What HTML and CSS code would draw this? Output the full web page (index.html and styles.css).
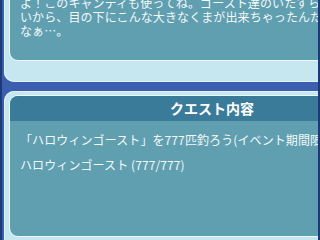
FILE: index.html
```html
<!DOCTYPE html>
<html>
<head>
  <title>クエスト内容</title>
  <link rel="stylesheet" href="styles.css">
</head>
<body>
  <div class="frame">
    <div class="panel talk">
      <div class="box">
        <p class="talk-text">よ！このキャンディも使ってね。ゴースト達のいたずらっ<br>いから、目の下にこんな大きなくまが出来ちゃったんだ<br>なぁ…。</p>
      </div>
    </div>

    <div class="panel quest">
      <div class="box">
        <div class="box-head">クエスト内容</div>
        <div class="box-body">
          <p>「ハロウィンゴースト」を777匹釣ろう(イベント期間限定)</p>
          <p>ハロウィンゴースト (777/777)</p>
        </div>
      </div>
    </div>
  </div>
</body>
</html>
```

FILE: styles.css
```css
body {
  margin: 0;
  background: #3b5fae;
  font-family: "Noto Sans CJK JP", "DejaVu Sans", sans-serif;
  overflow: hidden;
}
.frame {
  width: 320px;
  height: 240px;
  box-sizing: border-box;
  overflow: hidden;
  background: #3b5fae;
  border-left: 2px solid #1c3a78;
  border-right: 2px solid #1c3a78;
  padding-left: 2px;
}
.panel {
  width: 404px;
  padding: 6px;
  background: #c6e6f0;
  border-radius: 10px;
  box-shadow: inset 0 0 0 1px #dff3f8;
}
.talk {
  margin-top: -20px;
  padding-bottom: 22px;
}
.quest {
  margin-top: 9px;
  padding-top: 5px;
  padding-bottom: 40px;
}
.box {
  background: #609fb0;
  border-radius: 8px;
  box-shadow: 0 0 0 1px #eaf8fc;
  overflow: hidden;
  color: #f4f9fa;
}
.talk .box {
  padding: 10px 10px 22px;
}
.talk-text {
  margin: 0;
  font-size: 12px;
  line-height: 14px;
  letter-spacing: 0.1px;
  white-space: nowrap;
}
.box-head {
  background: #3b7b9a;
  height: 25px;
  line-height: 25px;
  text-align: center;
  font-size: 14px;
  font-weight: bold;
  color: #ffffff;
}
.box-body {
  padding: 11px 10px 54px;
}
.box-body p {
  margin: 0 0 9px;
  font-size: 12px;
  line-height: 16px;
  letter-spacing: 0.1px;
  white-space: nowrap;
}
```
